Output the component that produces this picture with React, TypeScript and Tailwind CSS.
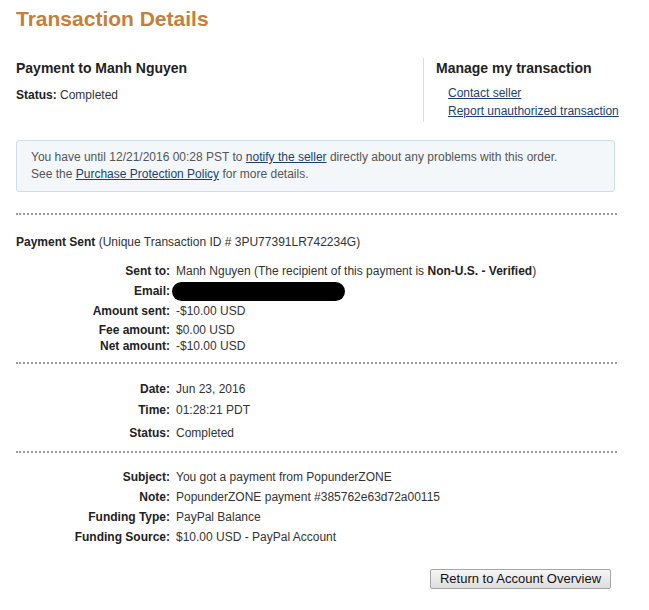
type Field = {
  label: string;
  value: React.ReactNode;
  h: string;
};

const sentRows: Field[] = [
  {
    label: "Sent to:",
    value: (
      <>
        Manh Nguyen (The recipient of this payment is <b className="text-[#222]">Non-U.S. - Verified</b>)
      </>
    ),
    h: "h-[21px]",
  },
  {
    label: "Email:",
    value: <span className="block h-[19px] w-[173px] -ml-[4px] rounded-full bg-black" />,
    h: "h-[20px]",
  },
  { label: "Amount sent:", value: "-$10.00 USD", h: "h-[20px]" },
  { label: "Fee amount:", value: "$0.00 USD", h: "h-[17px]" },
  { label: "Net amount:", value: "-$10.00 USD", h: "h-[15px]" },
];

const dateRows: Field[] = [
  { label: "Date:", value: "Jun 23, 2016", h: "h-[21px]" },
  { label: "Time:", value: "01:28:21 PDT", h: "h-[21px]" },
  { label: "Status:", value: "Completed", h: "h-[26px]" },
];

const noteRows: Field[] = [
  { label: "Subject:", value: "You got a payment from PopunderZONE", h: "h-[20px]" },
  { label: "Note:", value: "PopunderZONE payment #385762e63d72a00115", h: "h-[20px]" },
  { label: "Funding Type:", value: "PayPal Balance", h: "h-[20px]" },
  { label: "Funding Source:", value: "$10.00 USD - PayPal Account", h: "h-[20px]" },
];

function Rows({ rows }: { rows: Field[] }) {
  return (
    <div>
      {rows.map((r) => (
        <div key={r.label} className={`flex items-center whitespace-nowrap ${r.h}`}>
          <div className="w-[154px] text-right font-bold text-[#222]">{r.label}</div>
          <div className="pl-[6px] text-[#333]">{r.value}</div>
        </div>
      ))}
    </div>
  );
}

function Dots({ className }: { className: string }) {
  return <div className={`border-t-2 border-dotted border-[#9a9a9a] ${className}`} />;
}

export default function App() {
  return (
    <div className="min-h-[610px] bg-white font-['Liberation_Sans',Arial,sans-serif] text-[12px] leading-[16px] text-[#333]">
      <div className="ml-[16px] w-[601px]">
        <h1 className="pt-[7px] text-[21px] font-bold leading-[24px] text-[#c2803f]">Transaction Details</h1>

        <div className="mt-[27px] flex">
          <div className="w-[407px] shrink-0">
            <h2 className="text-[14px] font-bold leading-[20px] text-[#222]">Payment to Manh Nguyen</h2>
            <p className="mt-[9px]">
              <b className="text-[#222]">Status:</b> Completed
            </p>
          </div>
          <div className="flex-1 whitespace-nowrap border-l border-[#dcdcdc] pb-[2px] pl-[12px]">
            <h2 className="text-[14px] font-bold leading-[20px] text-[#222]">Manage my transaction</h2>
            <div className="mt-[6px] flex flex-col items-start pl-[12px] leading-[18px] text-[#1d3f6e]">
              <a href="#" className="underline">Contact seller</a>
              <a href="#" className="underline">Report unauthorized transaction</a>
            </div>
          </div>
        </div>

        <div className="mt-[18px] mr-[2px] rounded-[3px] border border-[#cfdde6] bg-[#f3f7fa] py-[8px] pl-[14px] leading-[17px] text-[#555]">
          <p>
            You have until 12/21/2016 00:28 PST to{" "}
            <a href="#" className="text-[#1d3f6e] underline">notify the seller</a> directly about any problems with this order.
          </p>
          <p>
            See the <a href="#" className="text-[#1d3f6e] underline">Purchase Protection Policy</a> for more details.
          </p>
        </div>

        <Dots className="mt-[21px]" />

        <p className="mt-[19px] text-[#333]">
          <b className="text-[#222]">Payment Sent</b> (Unique Transaction ID # 3PU77391LR742234G)
        </p>
        <div className="mt-[10px]">
          <Rows rows={sentRows} />
        </div>

        <Dots className="mt-[9px]" />
        <div className="mt-[14px]">
          <Rows rows={dateRows} />
        </div>

        <Dots className="mt-[5px]" />
        <div className="mt-[14px]">
          <Rows rows={noteRows} />
        </div>

        <div className="mt-[22px] flex justify-end pr-[6px]">
          <button className="h-[20px] w-[181px] rounded-[2px] border border-[#a5a5a5] bg-gradient-to-b from-[#f6f6f6] to-[#dedede] text-[13px] leading-[18px] text-[#111]">
            Return to Account Overview
          </button>
        </div>
      </div>
    </div>
  );
}
